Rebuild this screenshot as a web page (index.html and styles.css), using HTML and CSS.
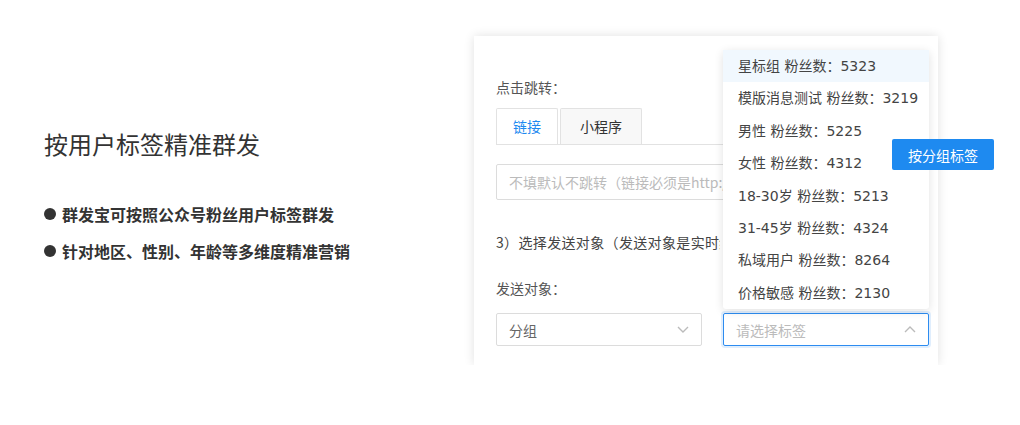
FILE: index.html
```html
<!DOCTYPE html>
<html lang="zh-CN">
<head>
    <meta charset="UTF-8">
    <meta name="viewport" content="width=device-width, initial-scale=1.0">
    <link rel="stylesheet" href="styles.css">
</head>
<body>
    <div class="page">
        <!-- 左侧说明 -->
        <section class="intro">
            <h2 class="intro-title">按用户标签精准群发</h2>
            <ul class="intro-list">
                <li>群发宝可按照公众号粉丝用户标签群发</li>
                <li>针对地区、性别、年龄等多维度精准营销</li>
            </ul>
        </section>

        <!-- 右侧表单卡片 -->
        <section class="card">
            <div class="label">点击跳转：</div>

            <div class="tabs">
                <div class="tab active">链接</div>
                <div class="tab tab-wide">小程序</div>
            </div>

            <div class="input-wrap">
                <input class="text-input" type="text" placeholder="不填默认不跳转（链接必须是http://或https://开头）">
            </div>

            <div class="step">3）选择发送对象（发送对象是实时统计的粉丝数量）</div>

            <div class="label label-target">发送对象：</div>

            <div class="select-row">
                <div class="select">
                    <span class="select-value">分组</span>
                    <svg class="arrow" width="12" height="7" viewBox="0 0 12 7"><path d="M1 1l5 5 5-5" fill="none" stroke="#bbb" stroke-width="1.4"/></svg>
                </div>
                <div class="select focused">
                    <span class="select-placeholder">请选择标签</span>
                    <svg class="arrow" width="12" height="7" viewBox="0 0 12 7"><path d="M1 6l5-5 5 5" fill="none" stroke="#bbb" stroke-width="1.4"/></svg>
                </div>
            </div>

            <!-- 标签下拉 -->
            <ul class="dropdown">
                <li class="hover">星标组 粉丝数：5323</li>
                <li>模版消息测试 粉丝数：3219</li>
                <li>男性 粉丝数：5225</li>
                <li>女性 粉丝数：4312</li>
                <li>18-30岁 粉丝数：5213</li>
                <li>31-45岁 粉丝数：4324</li>
                <li>私域用户 粉丝数：8264</li>
                <li>价格敏感 粉丝数：2130</li>
            </ul>

            <button class="tag-btn">按分组标签</button>
        </section>
    </div>
</body>
</html>
```

FILE: styles.css
```css
/* 公共 */
body {
    margin: 0;
    background: #fff;
    font-family: "Noto Sans CJK SC", "Noto Sans", sans-serif;
    color: #333;
}

.page {
    display: flex;
    padding: 36px 0 0 44px;
}

/* 左侧说明 */
.intro {
    width: 430px;
    flex-shrink: 0;
}

.intro-title {
    margin: 91px 0 0;
    font-size: 24px;
    font-weight: 400;
    line-height: 34px;
    color: #333;
}

.intro-list {
    list-style: none;
    margin: 42px 0 0;
    padding: 0;
}

.intro-list li {
    font-size: 16px;
    font-weight: 700;
    line-height: 22px;
    margin-bottom: 15px;
    display: flex;
    align-items: center;
}

.intro-list li::before {
    content: "";
    width: 12px;
    height: 12px;
    border-radius: 50%;
    background: #333;
    margin-right: 6px;
}

/* 表单卡片 */
.card {
    position: relative;
    width: 464px;
    box-sizing: border-box;
    padding: 41px 9px 19px 22px;
    background: #fff;
    box-shadow: 0 0 10px rgba(0, 0, 0, 0.12);
}

.label {
    font-size: 14px;
    line-height: 20px;
    color: #555;
}

.tabs {
    display: flex;
    margin-top: 11px;
    border-bottom: 1px solid #e2e2e2;
}

.tab {
    height: 35px;
    line-height: 35px;
    padding: 0 16px;
    margin-right: 2px;
    font-size: 14px;
    color: #333;
    background: #f8f8f8;
    border: 1px solid #e2e2e2;
    border-bottom: none;
    border-radius: 2px 2px 0 0;
}

.tab.active {
    background: #fff;
    color: #1e8af0;
}

.tab-wide {
    padding: 0 19px;
}

/* 输入框被下拉层盖住的部分直接裁掉 */
.input-wrap {
    width: 227px;
    overflow: hidden;
    margin-top: 19px;
}

.text-input {
    display: block;
    width: 433px;
    box-sizing: border-box;
    height: 36px;
    padding: 0 12px;
    border: 1px solid #dcdcdc;
    border-radius: 2px;
    font-family: inherit;
    font-size: 14px;
    outline: none;
}

.text-input::placeholder {
    color: #bbb;
}

.step {
    width: 224px;
    margin-top: 32px;
    font-size: 14px;
    line-height: 20px;
    letter-spacing: 0.35px;
    color: #444;
    white-space: nowrap;
    overflow: hidden;
}

.label-target {
    margin-top: 26px;
}

.select-row {
    display: flex;
    gap: 21px;
    margin-top: 15px;
}

.select {
    width: 206px;
    height: 33px;
    box-sizing: border-box;
    padding: 0 12px;
    border: 1px solid #dcdcdc;
    border-radius: 2px;
    display: flex;
    align-items: center;
    justify-content: space-between;
    font-size: 14px;
}

.select-value {
    color: #666;
}

.select-placeholder {
    color: #bbb;
}

.select.focused {
    border-color: #2d8cf0;
    box-shadow: 0 0 0 2px rgba(45, 140, 240, 0.15);
}

/* 下拉层 */
.dropdown {
    position: absolute;
    left: 249px;
    top: 14px;
    width: 206px;
    margin: 0;
    padding: 0;
    list-style: none;
    background: #fff;
    border-radius: 3px;
    box-shadow: 0 2px 10px rgba(0, 0, 0, 0.12);
    font-family: "DejaVu Sans", "Noto Sans CJK SC", sans-serif;
}

.dropdown li {
    height: 32.4px;
    line-height: 32.4px;
    padding-left: 15px;
    font-size: 14px;
    color: #444;
    white-space: nowrap;
}

.dropdown li.hover {
    background: #f1f8fe;
}

/* 按钮 */
.tag-btn {
    position: absolute;
    left: 418px;
    top: 103px;
    height: 31px;
    padding: 0 16px;
    border: none;
    border-radius: 2px;
    background: #1e8af0;
    color: #fff;
    font-family: inherit;
    font-size: 14px;
    white-space: nowrap;
    cursor: pointer;
}
```
